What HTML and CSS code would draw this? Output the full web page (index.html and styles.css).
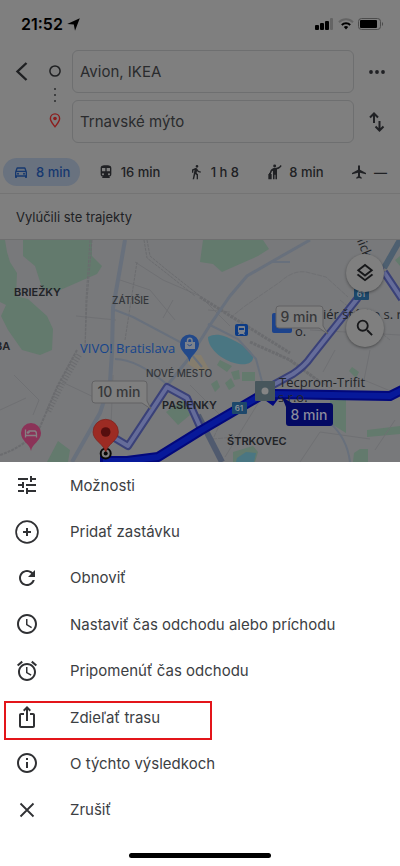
FILE: index.html
```html
<!DOCTYPE html>
<html lang="sk">
<head>
<meta charset="utf-8">
<meta name="viewport" content="width=device-width, initial-scale=1">
<title>Trasa: Avion, IKEA – Trnavské mýto</title>
<link rel="stylesheet" href="styles.css">
</head>
<body>
<header class="top">
  <div class="status">
    <span class="clock">21:52</span>
    <svg width="13" height="13" viewBox="0 0 13 13"><path d="M12.800.2 8 12.800 6.800 6.500.2 6z" fill="#000"/></svg>
    <div class="status-right">
      <svg width="19" height="12" viewBox="0 0 19 12"><rect x="0" y="7" width="4" height="5" rx="1"/><rect x="5" y="5" width="4" height="7" rx="1"/><rect x="10" y="3" width="4" height="9" rx="1"/><rect x="15" y="0" width="3" height="12" rx="1" fill="#646464"/></svg>
      <svg width="16" height="12" viewBox="0 0 16 12" fill="none" stroke-width="2"><path d="M1 4.200a10 10 0 0 1 14 0" stroke="#646464"/><path d="M3.800 7a6 6 0 0 1 8.400 0" stroke="#000"/><path d="M5.800 9.100a3.200 3.200 0 0 1 4.400 0L8 11.600z" fill="#000"/></svg>
      <svg width="26" height="12" viewBox="0 0 26 12"><rect x=".5" y=".5" width="22" height="11" rx="3" fill="none" stroke="#4c4c4c"/><rect x="2" y="2" width="17" height="8" rx="1"/><path d="M24 4a2.400 2.400 0 0 1 0 4z" fill="#4c4c4c"/></svg>
    </div>
  </div>
  <form class="route">
    <button class="back" type="button" aria-label="Späť"><svg width="14" height="20" viewBox="0 0 14 20"><path d="M11.500 1 2.500 9.500l9 8.500" fill="none" stroke="#1f2022" stroke-width="2.400"/></svg></button>
    <div class="stops">
      <svg width="12" height="12" viewBox="0 0 12 12"><circle cx="6" cy="6" r="5.100" fill="none" stroke="#1f2022" stroke-width="1.500"/></svg>
      <svg width="4" height="16" viewBox="0 0 4 16" fill="#2a2b2d"><circle cx="2" cy="2" r="1"/><circle cx="2" cy="8" r="1"/><circle cx="2" cy="14" r="1"/></svg>
      <svg width="12" height="15" viewBox="0 0 12 15"><path d="M6 13.700C4 11 1.400 8.500 1.400 5.500a4.600 4.600 0 0 1 9.200 0C10.600 8.500 8 11 6 13.700z" fill="none" stroke="#8c1d1d" stroke-width="1.400"/><circle cx="6" cy="5.500" r="1.800" fill="#8c1d1d"/></svg>
    </div>
    <input class="field" type="text" aria-label="Začiatok" value="Avion, IKEA">
    <button class="side" type="button" aria-label="Viac"><svg width="16" height="4" viewBox="0 0 16 4" fill="#202124"><circle cx="2" cy="2" r="1.900"/><circle cx="8" cy="2" r="1.900"/><circle cx="14" cy="2" r="1.900"/></svg></button>
    <input class="field" type="text" aria-label="Cieľ" value="Trnavské mýto">
    <button class="side" type="button" aria-label="Vymeniť"><svg width="16" height="20" viewBox="0 0 16 20" fill="none" stroke="#202124" stroke-width="2"><path d="M5 11V2M1 5.500l4-4 4 4M10.500 9v9M6.500 14.500l4 4 4-4"/></svg></button>
  </form>
  <nav class="modes">
    <button class="mode active" type="button"><svg width="16" height="16" viewBox="0 0 24 24"><path d="M18.920 6.010C18.720 5.420 18.160 5 17.500 5h-11c-.66 0-1.210.42-1.420 1.010L3 12v8c0 .55.45 1 1 1h1c.55 0 1-.45 1-1v-1h12v1c0 .55.45 1 1 1h1c.55 0 1-.45 1-1v-8l-2.080-5.990zM6.850 7h10.290l1.080 3.110H5.770L6.850 7zM19 17H5v-5h14v5z"/><circle cx="7.500" cy="14.500" r="1.500"/><circle cx="16.500" cy="14.500" r="1.500"/></svg>8 min</button>
    <button class="mode" type="button"><svg width="16" height="16" viewBox="0 0 24 24"><path d="M12 2c-4.420 0-8 .5-8 4v9.500C4 17.430 5.570 19 7.500 19L6 20.500v.5h12v-.5L16.500 19c1.930 0 3.500-1.570 3.500-3.500V6c0-3.500-3.580-4-8-4zM7.500 17c-.83 0-1.500-.67-1.500-1.500S6.670 14 7.500 14s1.500.67 1.500 1.500S8.330 17 7.500 17zm3.500-6H6V6h5v5zm5.500 6c-.83 0-1.500-.67-1.500-1.500s.67-1.500 1.500-1.500 1.500.67 1.500 1.500-.67 1.500-1.500 1.500zm1.500-6h-5V6h5v5z"/></svg>16 min</button>
    <button class="mode" type="button"><svg width="16" height="16" viewBox="0 0 24 24"><path d="M13.500 5.500c1.100 0 2-.9 2-2s-.9-2-2-2-2 .9-2 2 .9 2 2 2zM9.800 8.900L7 23h2.100l1.800-8 2.100 2v6h2v-7.500l-2.100-2 .6-3C14.800 12 16.800 13 19 13v-2c-1.900 0-3.500-1-4.300-2.400l-1-1.600c-.4-.6-1-1-1.700-1-.3 0-.5.1-.8.1L6 8.300V13h2V9.600l1.800-.7"/></svg>1 h 8</button>
    <button class="mode" type="button"><svg width="16" height="16" viewBox="0 0 24 24"><circle cx="13" cy="3" r="2.200"/><path d="M22 1.500 23.500 3c-2 3-4.300 4.500-7 5v15h-2.300v-7h-1.400v7h-2.300V10c-1.500.5-2.500 1.500-2.500 3.500H6c0-4 2.500-7.500 7-7.500 4 0 6.500-1 9-4.500zM3.500 15h1v-2h3v2h1v8h-5z"/></svg>8 min</button>
    <button class="mode" type="button"><svg width="16" height="16" viewBox="0 0 24 24"><path d="M22.500 15.500v-2L13.500 8.500V3.500a1.500 1.500 0 0 0-3 0v5l-9 5v2l9-2.500v5.500L8 20.300V22l4-1 4 1v-1.700l-2.500-1.800V13z"/></svg>—</button>
  </nav>
</header>
<p class="notice">Vylúčili ste trajekty</p>
<main class="map">
  <svg class="map-art" viewBox="0 240 400 222" preserveAspectRatio="xMidYMid slice" role="img" aria-label="Mapa trasy">
    <rect y="240" width="400" height="222" fill="#78797b"/>
    <g fill="#637a6d">
      <path d="M23 240v16l12 10 7 22 16 3 25-11 14-6 5-8-10-10v-16zM0 240h5l2 12 3 10 7 11-1 23 12 3 19 17 6 13-1 21-12 5-18-5-14-20-7-14 5-11-6-3zM203 240h60l6 9-11 7-18 8-18 8-9-8-13-2z"/>
      <path d="M217 365l3-5 12 6-5 6zM211 384l6-4 3 7-5 5zM225 383l6-5 4 8-6 4zM231 372l8-2 1 9-6 1zM242 372h13v9h-13zM166 412l17-12 7 15-12 10zM58 441l12 9-2 12H47zM330 398h16v35l-16-10zM367 430l33-4v8l-33 3zM354 453l6-4h8v13h-15zM349 371l3-4 7 5-3 6zM233 452l20-6 5 6-3 10h-22zM395 260l5-4v10z"/>
    </g>
    <g fill="#4a7682"><path d="M208 337c8-5 18-1 25 3 8 4 18 9 20 16 1 7-6 9-14 8-14-2-31-14-31-27zM237 458l9-6 10 1-2 9h-18z"/></g>
    <path d="M188 355h13l8 14-9 3-12-8z" fill="#857d6d"/>
    <g fill="none" stroke="#6f7073" stroke-width="1">
      <path d="M135 262l28 18 37 16 30 30M163 318l10-18M76 316l40 4M120 280l30 10 25 30M14 375l25 25-6 15M62 382l38 18M113 375l-2 50M265 392l-40 65M370 350l-6 30 36 15M310 330l90 5M300 462l20-30 50 7M190 385l30 30M335 350l-12 22M375 450l20-30M230 312l-22-2M0 410l26-12"/>
      <path d="M230 318l15-12 35-24q13-12 26-10l20 5 22 20M276 352l60 40M340 300l50 40M235 437l-22 2 10-22" stroke-dasharray="5 1"/>
    </g>
    <g fill="none" stroke="#6b6c6f" stroke-dasharray="3 1">
      <path d="M92 240l-5 60-2 50M90 240l-4 60-1 50M147 240l3 16 17 14 33 26M144 240l3 18 18 14 30 24M137 262l-12 78"/>
      <path d="M200 297l90 56" stroke-width="3"/>
      <path d="M77 350L57 387 40 427Q25 447 0 455" stroke-width="2"/>
      <path d="M79 355L62 384 48 412" stroke-width="6" stroke-dasharray="1 2"/>
      <path d="M250 342l40 18 30 22" stroke-width="3"/>
    </g>
    <g fill="none" stroke="#68707c">
      <path d="M125 240l-7 40-5 28-1 44-2 30-10 31-28 49" stroke-width="4"/>
      <path d="M310 240l-37 21-26 15-17 20-20 29-20 32-24 30" stroke-width="3"/>
      <path d="M115 310l18 7 49 26 20 24M115 359q22 0 54 27M208 324l30 15 18 20 8 30" stroke-width="2"/>
      <path d="M330 423q17 15 20 39M270 262l20 0" stroke-width="2"/>
      <path d="M384 268l16-28" stroke-width="6" stroke="#4d5f70"/>
      <path d="M198 415l24 47" stroke-width="6" stroke="#505a6e"/>
    </g>
    <g class="caps">
      <text x="14" y="296">BRIEŽKY</text><text x="-5" y="350">BA</text><text x="227" y="445">ŠTRKOVEC</text>
    </g>
    <g class="caps small"><text x="112" y="304">ZÁTIŠIE</text><text x="146" y="377">NOVÉ MESTO</text></g>
    <g fill="none" stroke-linejoin="round">
      <path d="M262 391l31-17q12-8 18-17l46-58 24-33M384 272l18 27M108 434l20 12 39-59 20 11 14 31" stroke="#3a4178" stroke-width="8"/>
      <path d="M262 391l31-17q12-8 18-17l46-58 24-33M384 272l18 27M108 434l20 12 39-59 20 11 14 31" stroke="#656c99" stroke-width="4"/>
      <path d="M100 461h27l31-4 42-26 60-35 14-2 116 2 12-6M265 394l11 8" stroke="#02087c" stroke-width="10"/>
      <path d="M103 461h24l31-4 42-26 60-35 14-2 116 2 12-6" stroke="#07199a" stroke-width="6"/>
    </g>
    <text class="caps" x="162" y="409">PASIENKY</text>
    <text class="poi blue" x="80" y="353">VIVO! Bratislava</text>
    <text class="poi" x="355" y="236" transform="rotate(68 355 236)">nická</text>
    <rect x="272" y="313" width="20" height="20" rx="2" fill="#1c438c"/>
    <text class="poi" x="323" y="319">iér štúdio s. r.</text><text class="poi" x="295" y="336">o.</text>
    <text class="poi" x="279" y="387">Tecprom-Trifit</text><text class="poi" x="278" y="402">s.r.o.</text>
    <rect x="255" y="381" width="20" height="20" rx="1" fill="#47565c"/><circle cx="265" cy="391" r="3.500" fill="#858585"/>
    <g fill="#1d486b"><rect x="232" y="402" width="15" height="12" rx="1"/><rect x="354" y="288" width="15" height="12" rx="1"/></g>
    <g class="shield"><text x="239" y="411">61</text><text x="361" y="297">61</text></g>
    <rect x="235" y="324" width="13" height="12" rx="2" fill="#0c3b85"/>
    <path d="M239 326h5q1 0 1 1v5l-1 1 1 2h-1l-1-1h-3l-1 1h-1l1-2-1-1v-5q0-1 1-1zm0 2v2h5v-2z" fill="#7c828c" fill-rule="evenodd"/>
    <path d="M189.500 362c-1-7-9.500-10-9.500-18a9.500 9.500 0 0 1 19 0c0 8-8.500 11-9.500 18z" fill="#22498a"/>
    <path d="M187.500 342v-1.500a2.200 2.200 0 0 1 4.500 0v1.500" fill="none" stroke="#7c828c" stroke-width="1.500"/><path d="M185 342h10v7h-10z" fill="#7c828c"/><path d="M187.500 344.500q2 2.500 4.500 0" fill="none" stroke="#22498a"/>
    <path d="M31 451c-1-7-10-10-10-18a10 10 0 0 1 20 0c0 8-9 11-10 18z" fill="#8b3358"/>
    <path d="M25.500 429.500v8M25.500 435.500h11v2M29 433v-2h5.500q2 0 2 3.500v1" fill="none" stroke="#868083" stroke-width="1.300"/><circle cx="28" cy="432.500" r="1.300" fill="#868083"/>
    <circle cx="105.700" cy="453.500" r="5" fill="#808080" stroke="#080808" stroke-width="2"/>
    <path d="M105.700 453c-1-9-12.700-12-12.700-21a12.700 12.700 0 0 1 25.400 0c0 9-11.700 12-12.700 21z" fill="#9c2b23" stroke="#7d201b" stroke-width=".7"/><circle cx="105.700" cy="432" r="4.800" fill="#560e0e"/><circle cx="105.700" cy="453.500" r="2" fill="#080808"/>
    <g fill="#7f7f7f" stroke="#626264">
      <path d="M95 381h49q3 0 3 3v17l4 8-9-6H95q-3 0-3-3v-16q0-3 3-3z"/>
      <path d="M279 306h41q3 0 3 3v17l5 8-9-6h-40q-3 0-3-3v-16q0-3 3-3z"/>
    </g>
    <path d="M282 397l10 6h38q3 0 3 3v17q0 3-3 3h-41q-3 0-3-3v-16z" fill="#030963"/>
    <g class="time"><text x="119" y="397">10 min</text><text x="299" y="322">9 min</text><text class="light" x="309" y="420">8 min</text></g>
  </svg>
  <div class="map-tools">
    <button type="button" aria-label="Vrstvy"><svg width="22" height="22" viewBox="0 0 24 24"><path d="M11.990 18.540l-7.370-5.730L3 14.070l9 7 9-7-1.630-1.270-7.380 5.740zM12 16l7.360-5.730L21 9l-9-7-9 7 1.630 1.270L12 16zm0-11.470L17.740 9 12 13.470 6.260 9 12 4.530z"/></svg></button>
    <button type="button" aria-label="Hľadať"><svg width="22" height="22" viewBox="0 0 24 24"><path d="M15.500 14h-.79l-.28-.27A6.471 6.471 0 0 0 16 9.500 6.500 6.500 0 1 0 9.500 16c1.610 0 3.090-.59 4.230-1.570l.27.28v.79l5 4.990L20.490 19l-4.990-5zm-6 0C7.010 14 5 11.990 5 9.500S7.010 5 9.500 5 14 7.010 14 9.500 11.990 14 9.500 14z"/></svg></button>
  </div>
</main>
<section class="sheet" aria-label="Ponuka">
  <ul class="actions">
    <li><button type="button"><svg viewBox="0 0 24 24"><path d="M3 17v2h6v-2H3zM3 5v2h10V5H3zm10 16v-2h8v-2h-8v-2h-2v6h2zM7 9v2H3v2h4v2h2V9H7zm14 4v-2H11v2h10zm-6-4h2V7h4V5h-4V3h-2v6z"/></svg>Možnosti</button></li>
    <li><button type="button"><svg viewBox="0 0 24 24"><path d="M12 8v8M8 12h8" stroke="#303134" stroke-width="2"/><circle cx="12" cy="12" r="10.900" fill="none" stroke="#303134" stroke-width="1.700"/></svg>Pridať zastávku</button></li>
    <li><button type="button"><svg viewBox="0 0 24 24"><path d="M17.650 6.350C16.200 4.900 14.210 4 12 4c-4.420 0-7.990 3.580-7.990 8s3.570 8 7.990 8c3.730 0 6.840-2.550 7.730-6h-2.080c-.82 2.330-3.040 4-5.650 4-3.310 0-6-2.690-6-6s2.690-6 6-6c1.660 0 3.140.69 4.220 1.780L13 11h7V4l-2.350 2.350z"/></svg>Obnoviť</button></li>
    <li><button type="button"><svg viewBox="0 0 24 24"><path d="M11.990 2C6.470 2 2 6.480 2 12s4.470 10 9.990 10C17.520 22 22 17.520 22 12S17.520 2 11.990 2zM12 20c-4.420 0-8-3.580-8-8s3.580-8 8-8 8 3.580 8 8-3.580 8-8 8zm.5-13H11v6l5.250 3.150.75-1.230-4.500-2.670z"/></svg>Nastaviť čas odchodu alebo príchodu</button></li>
    <li><button type="button"><svg viewBox="0 0 24 24"><path d="M22 5.720l-4.600-3.860-1.290 1.530 4.600 3.860L22 5.720zM7.880 3.390L6.600 1.860 2 5.710l1.290 1.530 4.590-3.850zM12.500 8H11v6l4.750 2.850.75-1.230-4-2.370V8zM12 4c-4.970 0-9 4.030-9 9s4.020 9 9 9c4.970 0 9-4.030 9-9s-4.030-9-9-9zm0 16c-3.870 0-7-3.130-7-7s3.130-7 7-7 7 3.130 7 7-3.130 7-7 7z"/></svg>Pripomenúť čas odchodu</button></li>
    <li class="marked"><button type="button"><svg viewBox="0 0 24 24"><path d="M16 5l-1.420 1.420-1.590-1.590V16h-1.980V4.830L9.420 6.420 8 5l4-4 4 4zm4 5v11c0 1.100-.9 2-2 2H6c-1.110 0-2-.9-2-2V10c0-1.110.89-2 2-2h3v2H6v11h12V10h-3V8h3c1.100 0 2 .89 2 2z"/></svg>Zdieľať trasu</button></li>
    <li><button type="button"><svg viewBox="0 0 24 24"><path d="M11 7h2v2h-2zm0 4h2v6h-2zm1-9C6.480 2 2 6.480 2 12s4.480 10 10 10 10-4.480 10-10S17.520 2 12 2zm0 18c-4.410 0-8-3.590-8-8s3.590-8 8-8 8 3.590 8 8-3.590 8-8 8z"/></svg>O týchto výsledkoch</button></li>
    <li><button type="button"><svg viewBox="0 0 24 24"><path d="M5.500 5.500l13 13M18.500 5.500l-13 13" stroke="#303134" stroke-width="1.800"/></svg>Zrušiť</button></li>
  </ul>
  <div class="home"></div>
</section>
</body>
</html>
```
FILE: styles.css
```css
*, *::after { box-sizing: border-box; }

body {
  margin: 0;
  min-height: 100vh;
  display: flex;
  flex-direction: column;
  background: #fff;
  color: #202124;
  font-family: Inter, "Liberation Sans", sans-serif;
}

button, input { font: inherit; color: inherit; }
button { border: 0; padding: 0; background: none; }
svg { display: block; flex: none; }

.top { background: #7f7f7f; border-bottom: 1px solid #747474; }

.status {
  height: 50px;
  padding: 0 16px 2px 21px;
  display: flex;
  align-items: center;
  gap: 4px;
  color: #000;
}
.clock { font-size: 16px; font-weight: 600; }
.status-right { margin-left: auto; display: flex; gap: 4px; }

.route {
  display: grid;
  grid-template-columns: 44px 22px 1fr 46px;
  grid-template-rows: 43px 43px;
  row-gap: 7px;
}
.back { display: grid; place-items: center; }
.stops {
  grid-row: 1 / 3;
  grid-column: 2;
  padding: 15px 0;
  display: flex;
  flex-direction: column;
  align-items: center;
  justify-content: space-between;
}
.field {
  min-width: 0;
  margin-left: 6px;
  padding: 0 7px;
  grid-column: 3;
  border: 1px solid #6e6f70;
  border-radius: 6px;
  background: transparent;
  color: #2a2b2d;
  font-size: 15px;
}
.side { grid-column: 4; display: grid; place-items: center; }

.modes {
  padding: 15px 3px 7px;
  display: flex;
  justify-content: space-between;
}
.mode {
  height: 28px;
  padding: 0 10px;
  display: flex;
  align-items: center;
  gap: 7px;
  border-radius: 14px;
  font-size: 13px;
  font-weight: 500;
  white-space: nowrap;
}
.mode svg { fill: #202124; }
.active { background: #69727f; color: #16386f; }
.active svg { fill: #16386f; }

.notice {
  height: 46px;
  margin: 0;
  padding: 0 16px;
  display: flex;
  align-items: center;
  border-bottom: 1px solid #6e6e6f;
  background: #7f7f7f;
  font-size: 13px;
}

.map { position: relative; }
.map-art { width: 100%; height: auto; }
.caps { font-size: 11px; font-weight: 600; fill: #212327; }
.small { font-size: 10px; font-weight: 500; fill: #33363a; }
.poi { font-family: "Open Sans", sans-serif; font-size: 13px; fill: #222427; }
.blue { fill: #15448c; }
.shield { font-size: 8px; font-weight: 600; fill: #8a9096; text-anchor: middle; }
.time { font-size: 14px; font-weight: 500; fill: #37383a; text-anchor: middle; }
.light { fill: #8a8c9c; }

.map-tools {
  position: absolute;
  top: 14px;
  right: 16px;
  display: grid;
  gap: 17px;
}
.map-tools button {
  width: 38px;
  height: 38px;
  display: grid;
  place-items: center;
  border-radius: 50%;
  background: #7f7f7f;
  box-shadow: 0 1px 3px #00000066;
}
.map-tools svg { fill: #17181a; }

.sheet {
  flex: 1;
  display: flex;
  flex-direction: column;
  background: #fff;
}
.actions {
  flex: 1;
  margin: 0;
  padding: 0;
  display: flex;
  flex-direction: column;
  list-style: none;
}
.actions li { flex: 1; display: flex; position: relative; }
.actions button {
  width: 100%;
  min-height: 44px;
  padding: 0 15px;
  display: flex;
  align-items: center;
  gap: 31px;
  color: #3c4043;
  font-size: 15px;
  text-align: left;
}
.actions svg { width: 24px; height: 24px; fill: #303134; }
.marked::after {
  content: "";
  position: absolute;
  top: 7px;
  bottom: 0;
  left: 4px;
  width: 208px;
  border: 2px solid #e3151a;
  pointer-events: none;
}
.home {
  width: 142px;
  height: 5px;
  margin: 20px auto 8px;
  border-radius: 3px;
  background: #000;
}
```
